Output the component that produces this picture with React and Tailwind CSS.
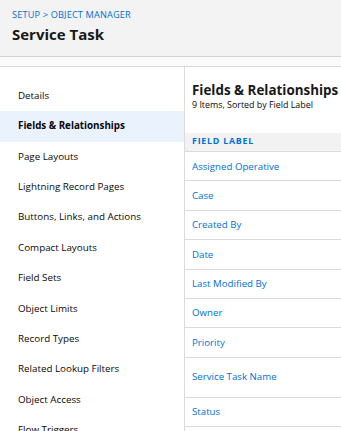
export default function App() {
  const side = [
    "Details",
    "Fields & Relationships",
    "Page Layouts",
    "Lightning Record Pages",
    "Buttons, Links, and Actions",
    "Compact Layouts",
    "Field Sets",
    "Object Limits",
    "Record Types",
    "Related Lookup Filters",
    "Object Access",
    "Flow Triggers",
  ];
  const rows = [
    ["Assigned Operative", "h-[29.4px]"],
    ["Case", "h-[29.4px]"],
    ["Created By", "h-[29.4px]"],
    ["Date", "h-[29.4px]"],
    ["Last Modified By", "h-[29.4px]"],
    ["Owner", "h-[29.4px]"],
    ["Priority", "h-[29.4px]"],
    ["Service Task Name", "h-[40px]"],
    ["Status", "h-[29.4px]"],
  ];
  return (
    <div className="w-[341px] h-[431px] overflow-hidden bg-white font-['Open_Sans',sans-serif] text-[#080707]">
      <div className="h-[57px] bg-[#f3f3f3] border-b border-[#d4d4d4] px-3 pt-[9px] shadow-[0_1px_2px_rgba(0,0,0,0.08)]">
        <div className="text-[9.2px] leading-[11px] text-[#0070d2] tracking-[0.15px]">SETUP &gt; OBJECT MANAGER</div>
        <div className="mt-[4px] text-[15px] leading-[20px] font-bold text-[#181818]">Service Task</div>
      </div>
      <div className="h-[10px] bg-[#fafafa] border-b border-[#d8d8d8]" />
      <div className="flex">
        <div className="w-[185px] shrink-0 border-r border-[#dddbda] pt-[14px]">
          {side.map((s) => (
            <div
              key={s}
              className={
                "h-[30.4px] flex items-center pl-[18px] text-[9.8px] " +
                (s === "Fields & Relationships" ? "bg-[#eaf3fd] font-bold" : "")
              }
            >
              {s}
            </div>
          ))}
        </div>
        <div className="flex-1 min-w-0">
          <div className="pl-[7px] pt-[15px] h-[66px] whitespace-nowrap">
            <div className="text-[13.4px] leading-[16px] font-bold text-[#181818]">Fields &amp; Relationships</div>
            <div className="text-[8.9px] leading-[12px] mt-[1px]">9 Items, Sorted by Field Label</div>
          </div>
          <div className="h-[19px] bg-[#f3f2f2] border-b border-[#dddbda] flex items-center pl-[7px] text-[8.8px] font-bold text-[#0070d2] tracking-[0.8px]">
            FIELD LABEL
          </div>
          {rows.map(([r, h], i) => (
            <div key={r} className={h + " border-b border-[#dddbda] flex items-center pl-[7px] text-[9.7px] text-[#0070d2] " + (i === 0 ? "pt-[3px]" : "pt-[1px]")}>
              {r}
            </div>
          ))}
        </div>
      </div>
    </div>
  );
}
